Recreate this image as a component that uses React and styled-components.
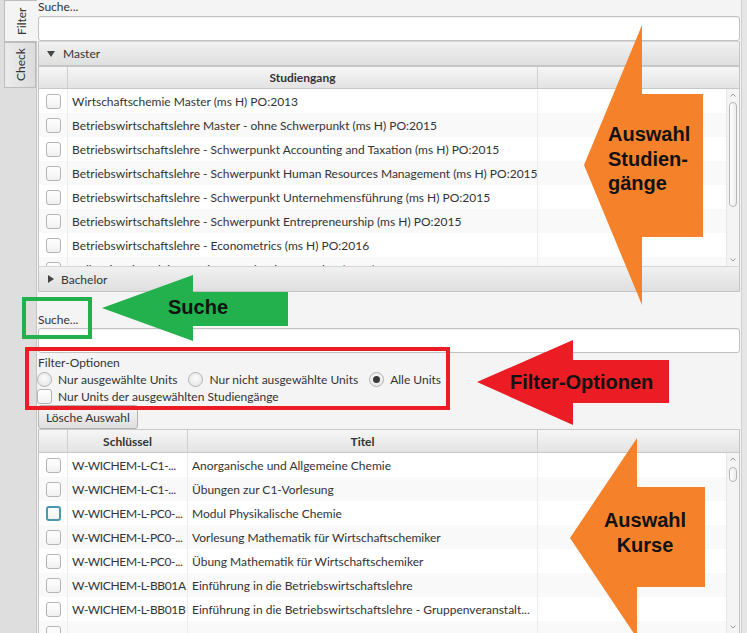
import React from 'react';
import styled, { createGlobalStyle } from 'styled-components';

const GlobalStyle = createGlobalStyle`
  html, body { margin: 0; padding: 0; }
  body {
    font-family: Lato, "Open Sans", sans-serif;
    font-size: 12px;
    color: #333;
  }
`;

const Window = styled.div`
  position: relative;
  display: flex;
  width: 747px;
  height: 633px;
  overflow: hidden;
  background: #f4f4f4;
`;

const SideBar = styled.div`
  width: 37px;
  flex-shrink: 0;
  box-sizing: border-box;
  padding-left: 4px;
  background: #dedede;
  border-right: 1px solid #c6c6c6;
  display: flex;
  flex-direction: column;
`;

const Tab = styled.div`
  height: ${p => p.$h}px;
  box-sizing: border-box;
  display: flex;
  align-items: center;
  justify-content: center;
  writing-mode: vertical-rl;
  transform: rotate(180deg);
  font-size: 12px;
  color: #333;
  background: ${p => (p.$active ? '#f4f4f4' : 'linear-gradient(to left, #ececec, #dcdcdc)')};
  border: 1px solid #bdbdbd;
  border-left: ${p => (p.$active ? 'none' : '1px solid #bdbdbd')};
  margin-right: ${p => (p.$active ? '-1px' : '0')};
`;

const Main = styled.div`
  flex: 1;
  min-width: 0;
  display: flex;
  flex-direction: column;
  padding-left: 1px;
`;

const RightStrip = styled.div`
  width: 6px;
  flex-shrink: 0;
  background: #e6e6e6;
  border-left: 1px solid #d0d0d0;
  box-sizing: border-box;
`;

const FieldLabel = styled.div`
  height: ${p => p.$h || 16}px;
  display: flex;
  align-items: flex-end;
  padding-bottom: ${p => p.$pb || 2}px;
  box-sizing: border-box;
  line-height: 14px;
`;

const SearchField = styled.div`
  height: 25px;
  box-sizing: border-box;
  margin-right: 1px;
  background: #fff;
  border: 1px solid #c2c2c2;
  border-radius: 3px;
  box-shadow: inset 0 1px 1px rgba(0, 0, 0, 0.06);
`;

const PaneHeader = styled.div`
  height: ${p => p.$h || 25}px;
  box-sizing: border-box;
  display: flex;
  align-items: center;
  gap: 8px;
  padding-left: 8px;
  margin-right: 1px;
  background: linear-gradient(#f1f1f1, #dfdfdf);
  border: 1px solid #c4c4c4;
  border-top-color: #d6d6d6;
  font-size: 12px;
  position: relative;
  z-index: 1;
`;

const Caret = styled.span`
  width: 0;
  height: 0;
  border-style: solid;
  ${p =>
    p.$open
      ? 'border-width: 6px 4px 0 4px; border-color: #444 transparent transparent transparent;'
      : 'border-width: 4px 0 4px 6px; border-color: transparent transparent transparent #444; margin-left: 1px; margin-right: -1px;'}
`;

const TableBox = styled.div`
  display: flex;
  flex-direction: column;
  margin-right: 1px;
  border-left: 1px solid #c4c4c4;
  border-right: 1px solid #c4c4c4;
  ${p => (p.$grow ? 'flex: 1; min-height: 0;' : '')}
`;

const HeaderRow = styled.div`
  height: ${p => p.$h}px;
  flex-shrink: 0;
  display: flex;
  box-sizing: border-box;
  background: linear-gradient(#f6f6f6, #e3e3e3);
  border-top: 1px solid #c8c8c8;
  border-bottom: 1px solid #c8c8c8;
`;

const HeaderCell = styled.div`
  ${p => (p.$w ? `width: ${p.$w}px;` : 'flex: 1;')}
  flex-shrink: 0;
  box-sizing: border-box;
  display: flex;
  align-items: center;
  justify-content: center;
  font-weight: 700;
  border-right: 1px solid #cfcfcf;
  &:last-child { border-right: none; }
`;

const Body = styled.div`
  display: flex;
  ${p => (p.$h ? `height: ${p.$h}px;` : 'flex: 1; min-height: 0;')}
  overflow: hidden;
  background: #fff;
`;

const Rows = styled.div`
  flex: 1;
  min-width: 0;
  display: flex;
  flex-direction: column;
`;

const Row = styled.div`
  height: 24px;
  flex-shrink: 0;
  display: flex;
  background: ${p => (p.$odd ? '#f9f9f9' : '#fff')};
`;

const Cell = styled.div`
  ${p => (p.$w ? `width: ${p.$w}px;` : 'flex: 1;')}
  flex-shrink: 0;
  box-sizing: border-box;
  display: flex;
  align-items: center;
  justify-content: ${p => (p.$center ? 'center' : 'flex-start')};
  padding-left: ${p => (p.$center ? 0 : 4)}px;
  letter-spacing: ${p => (p.$tight ? '-0.35px' : 'normal')};
  white-space: nowrap;
  overflow: hidden;
  border-right: 1px solid #ececec;
  &:last-child { border-right: none; }
`;

const Check = styled.span`
  width: 15px;
  height: 15px;
  box-sizing: border-box;
  display: inline-block;
  flex-shrink: 0;
  border-radius: 3px;
  border: ${p => (p.$focus ? '2px solid #4a98b0' : '1px solid #b4b4b4')};
  background: linear-gradient(#ffffff, #f1f1f1);
`;

const ScrollBar = styled.div`
  width: 12px;
  flex-shrink: 0;
  display: flex;
  flex-direction: column;
  align-items: center;
  background: #f4f4f4;
  border-left: 1px solid #e6e6e6;
`;

const ScrollArrow = styled.svg`
  width: 8px;
  height: 12px;
  flex-shrink: 0;
`;

const Thumb = styled.div`
  width: 8px;
  box-sizing: border-box;
  border: 1px solid #b5b5b5;
  border-radius: 4px;
  background: linear-gradient(to right, #ffffff, #ececec);
`;

const OptionsBox = styled.div`
  display: flex;
  flex-direction: column;
  margin-left: -1px;
`;

const OptionsLabel = styled.div`
  height: 17px;
  display: flex;
  align-items: center;
  padding-left: 1px;
  margin-top: 1px;
`;

const OptionRow = styled.div`
  height: ${p => p.$h || 17}px;
  display: flex;
  align-items: center;
  gap: 11px;
`;

const Option = styled.label`
  display: flex;
  align-items: center;
  gap: 6px;
  white-space: nowrap;
`;

const Radio = styled.span`
  width: 15px;
  height: 15px;
  box-sizing: border-box;
  border-radius: 50%;
  border: 1px solid #b2b2b2;
  background: radial-gradient(circle at 50% 40%, #fbfbfb, #e3e3e3);
  display: flex;
  align-items: center;
  justify-content: center;
  &::after {
    content: '';
    width: 7px;
    height: 7px;
    border-radius: 50%;
    background: ${p => (p.$on ? '#3a3a3a' : 'transparent')};
  }
`;

const Button = styled.button`
  align-self: flex-start;
  height: 24px;
  margin-top: 1px;
  padding: 0 7px;
  font-family: inherit;
  font-size: 12px;
  color: #333;
  background: linear-gradient(#f7f7f7, #dedede);
  border: 1px solid #b3b3b3;
  border-radius: 3px;
`;

const Overlay = styled.svg`
  position: absolute;
  left: 0;
  top: 0;
  width: 747px;
  height: 633px;
  pointer-events: none;
  z-index: 2;
`;

const Callout = styled.div`
  position: absolute;
  z-index: 3;
  left: ${p => p.$x}px;
  top: ${p => p.$y}px;
  ${p => (p.$w ? `width: ${p.$w}px; text-align: center;` : '')}
  font-family: "Liberation Sans", Arial, sans-serif;
  font-weight: 700;
  font-size: 20px;
  line-height: 24.5px;
  color: #111;
  white-space: nowrap;
`;

const studiengaenge = [
  'Wirtschaftschemie Master (ms H) PO:2013',
  'Betriebswirtschaftslehre Master - ohne Schwerpunkt (ms H) PO:2015',
  'Betriebswirtschaftslehre - Schwerpunkt Accounting and Taxation (ms H) PO:2015',
  'Betriebswirtschaftslehre - Schwerpunkt Human Resources Management (ms H) PO:2015',
  'Betriebswirtschaftslehre - Schwerpunkt Unternehmensführung (ms H) PO:2015',
  'Betriebswirtschaftslehre - Schwerpunkt Entrepreneurship (ms H) PO:2015',
  'Betriebswirtschaftslehre - Econometrics (ms H) PO:2016',
  'Volkswirtschaftslehre - Schwerpunkt Finanzmärkte (ms H) PO:2016',
];

const kurse = [
  ['W-WICHEM-L-C1-...', 'Anorganische und Allgemeine Chemie'],
  ['W-WICHEM-L-C1-...', 'Übungen zur C1-Vorlesung'],
  ['W-WICHEM-L-PC0-...', 'Modul Physikalische Chemie', true],
  ['W-WICHEM-L-PC0-...', 'Vorlesung Mathematik für Wirtschaftschemiker'],
  ['W-WICHEM-L-PC0-...', 'Übung Mathematik für Wirtschaftschemiker'],
  ['W-WICHEM-L-BB01A', 'Einführung in die Betriebswirtschaftslehre'],
  ['W-WICHEM-L-BB01B', 'Einführung in die Betriebswirtschaftslehre - Gruppenveranstalt...'],
  ['', ''],
];

const Scroll = ({ top, size }) => (
  <ScrollBar>
    <ScrollArrow viewBox="0 0 8 12">
      <polyline points="1.5,7.5 4,5 6.5,7.5" fill="none" stroke="#999" strokeWidth="1" />
    </ScrollArrow>
    <div style={{ height: top, flexShrink: 0 }} />
    <Thumb style={{ height: size }} />
    <div style={{ flex: 1 }} />
    <ScrollArrow viewBox="0 0 8 12">
      <polyline points="1.5,4.5 4,7 6.5,4.5" fill="none" stroke="#999" strokeWidth="1" />
    </ScrollArrow>
  </ScrollBar>
);

const App = () => (
  <Window>
    <GlobalStyle />
    <SideBar>
      <Tab $h={42} $active>Filter</Tab>
      <Tab $h={46}>Check</Tab>
    </SideBar>

    <Main>
      <FieldLabel>Suche...</FieldLabel>
      <SearchField />

      <PaneHeader>
        <Caret $open />
        Master
      </PaneHeader>
      <TableBox>
        <HeaderRow $h={23}>
          <HeaderCell $w={29} />
          <HeaderCell $w={470}>Studiengang</HeaderCell>
          <HeaderCell />
        </HeaderRow>
        <Body $h={177}>
          <Rows>
            {studiengaenge.map((s, i) => (
              <Row key={s} $odd={i % 2 === 1}>
                <Cell $w={29} $center><Check /></Cell>
                <Cell $w={470}>{s}</Cell>
                <Cell />
              </Row>
            ))}
          </Rows>
          <Scroll top={1} size={105} />
        </Body>
      </TableBox>
      <PaneHeader $h={26}>
        <Caret />
        Bachelor
      </PaneHeader>

      <FieldLabel $h={36} $pb={1}>Suche...</FieldLabel>
      <SearchField />

      <OptionsBox>
        <OptionsLabel>Filter-Optionen</OptionsLabel>
        <OptionRow>
          <Option><Radio />Nur ausgewählte Units</Option>
          <Option><Radio />Nur nicht ausgewählte Units</Option>
          <Option><Radio $on />Alle Units</Option>
        </OptionRow>
        <OptionRow $h={16}>
          <Option><Check />Nur Units der ausgewählten Studiengänge</Option>
        </OptionRow>
      </OptionsBox>
      <Button>Lösche Auswahl</Button>

      <TableBox $grow>
        <HeaderRow $h={24}>
          <HeaderCell $w={29} />
          <HeaderCell $w={120}>Schlüssel</HeaderCell>
          <HeaderCell $w={350}>Titel</HeaderCell>
          <HeaderCell />
        </HeaderRow>
        <Body>
          <Rows>
            {kurse.map(([key, title, focus], i) => (
              <Row key={i} $odd={i % 2 === 1}>
                <Cell $w={29} $center><Check $focus={focus} /></Cell>
                <Cell $w={120} $tight>{key}</Cell>
                <Cell $w={350}>{title}</Cell>
                <Cell />
              </Row>
            ))}
          </Rows>
          <Scroll top={2} size={15} />
        </Body>
      </TableBox>
    </Main>
    <RightStrip />

    <Overlay viewBox="0 0 747 633">
      <polygon
        points="703,94 642,94 642,25 584,165 642,305 642,237 703,237"
        fill="#f5822a"
      />
      <polygon
        points="705,487 637,487 637,438 570,538 637,638 637,587 705,587"
        fill="#f5822a"
      />
      <polygon points="288,292 193,292 193,275 102,308 193,341 193,326 288,326" fill="#22b14c" />
      <rect x="24" y="299" width="66" height="38" fill="none" stroke="#22b14c" strokeWidth="4" />
      <polygon points="669,360 573,360 573,340 477,382 573,425 573,403 669,403" fill="#ec1c24" />
      <rect x="27" y="349" width="421" height="59" fill="none" stroke="#ec1c24" strokeWidth="4" />
    </Overlay>
    <Callout $x={608} $y={122}>Auswahl<br />Studien-<br />gänge</Callout>
    <Callout $x={585} $y={508} $w={120}>Auswahl<br />Kurse</Callout>
    <Callout $x={168} $y={295}>Suche</Callout>
    <Callout $x={510} $y={370}>Filter-Optionen</Callout>
  </Window>
);

export default App;
